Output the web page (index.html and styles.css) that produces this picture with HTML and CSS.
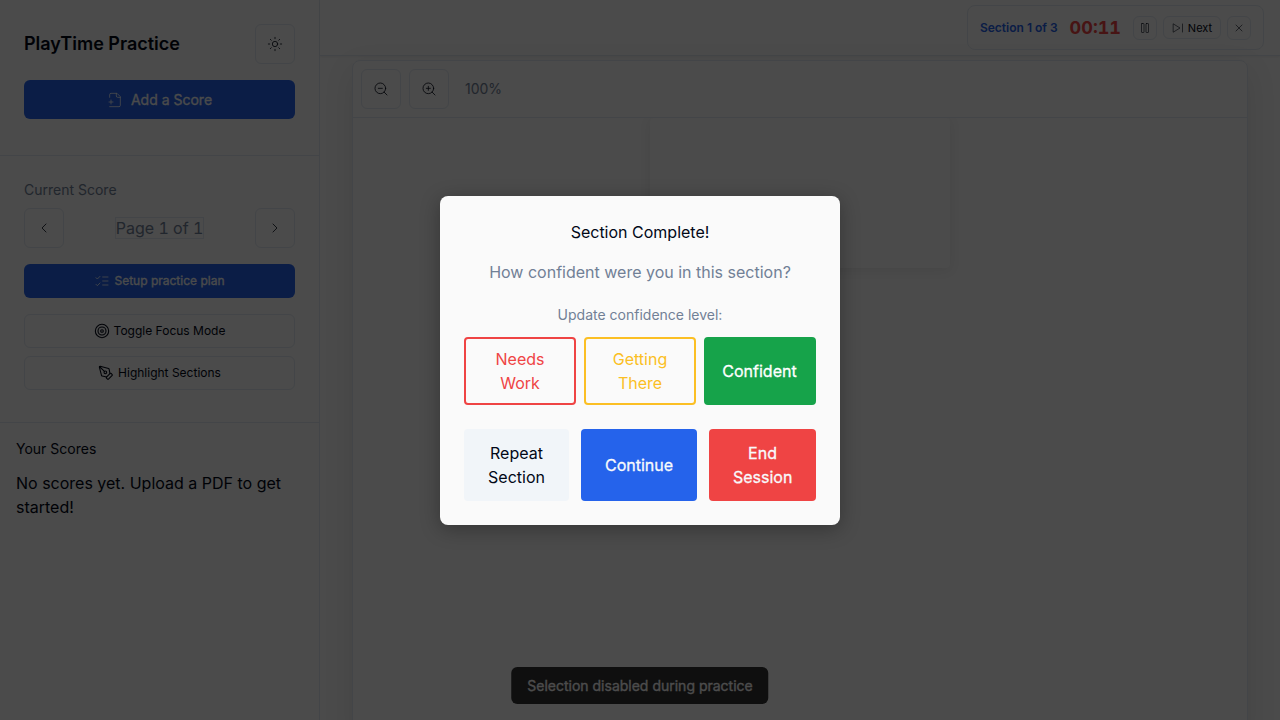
FILE: index.html
```html
<!DOCTYPE html>
<html lang="en">
<head>
<meta charset="utf-8">
<title>PlayTime Practice</title>
<link rel="stylesheet" href="styles.css">
</head>
<body>
<div class="app">
  <aside class="sidebar">
    <section class="brand">
      <div class="brand-row">
        <h1 class="title">PlayTime Practice</h1>
        <button class="icon-btn"><svg class="icon" viewBox="0 0 24 24"><circle cx="12" cy="12" r="4"/><path d="M12 2v2M12 20v2M4.93 4.93l1.41 1.41M17.66 17.66l1.41 1.41M2 12h2M20 12h2M6.34 17.66l-1.41 1.41M19.07 4.93l-1.41 1.41"/></svg></button>
      </div>
      <button class="btn btn-add"><svg class="icon" viewBox="0 0 24 24"><path d="M4 8V4a2 2 0 0 1 2-2h9l5 5v13a2 2 0 0 1-2 2H4"/><path d="M14 2v4a2 2 0 0 0 2 2h4M3 15h6M6 12v6"/></svg>Add a Score</button>
    </section>
    <section class="current">
      <div class="label">Current Score</div>
      <div class="pager">
        <button class="icon-btn"><svg class="icon" viewBox="0 0 24 24"><path d="m15 18-6-6 6-6"/></svg></button>
        <span class="page-text">Page 1 of 1</span>
        <button class="icon-btn"><svg class="icon" viewBox="0 0 24 24"><path d="m9 18 6-6-6-6"/></svg></button>
      </div>
      <button class="btn btn-plan"><svg class="icon" viewBox="0 0 24 24"><path d="m3 17 2 2 4-4M3 7l2 2 4-4M13 6h8M13 12h8M13 18h8"/></svg>Setup practice plan</button>
      <div class="tools">
        <button class="btn btn-outline"><svg class="icon" viewBox="0 0 24 24"><circle cx="12" cy="12" r="10"/><circle cx="12" cy="12" r="6"/><circle cx="12" cy="12" r="2"/></svg>Toggle Focus Mode</button>
        <button class="btn btn-outline"><svg class="icon" viewBox="0 0 24 24"><path d="M15.707 21.293a1 1 0 0 1-1.414 0l-1.586-1.586a1 1 0 0 1 0-1.414l5.586-5.586a1 1 0 0 1 1.414 0l1.586 1.586a1 1 0 0 1 0 1.414z"/><path d="m18 13-1.375-6.874a1 1 0 0 0-.746-.776L3.235 2.028a1 1 0 0 0-1.207 1.207L5.35 15.879a1 1 0 0 0 .776.746L13 18M2.3 2.3l7.286 7.286"/><circle cx="11" cy="11" r="2"/></svg>Highlight Sections</button>
      </div>
    </section>
    <section class="scores">
      <h2 class="scores-title">Your Scores</h2>
      <p class="empty">No scores yet. Upload a PDF to get started!</p>
    </section>
  </aside>
  <main class="main">
    <header class="topbar">
      <div class="session">
        <span class="step">Section 1 of 3</span>
        <span class="timer">00:11</span>
        <div class="controls">
          <button class="mini"><svg class="icon-sm" viewBox="0 0 24 24"><rect x="14" y="3" width="5" height="18" rx="1"/><rect x="5" y="3" width="5" height="18" rx="1"/></svg></button>
          <button class="mini mini-next"><svg class="icon-sm" viewBox="0 0 24 24"><path d="m3 4 13 8-13 8zM21 4v16"/></svg>Next</button>
          <button class="mini"><svg class="icon-sm" viewBox="0 0 24 24"><path d="M18 6 6 18M6 6l12 12"/></svg></button>
        </div>
      </div>
    </header>
    <div class="viewer">
      <div class="viewer-bar">
        <button class="icon-btn"><svg class="icon" viewBox="0 0 24 24"><circle cx="11" cy="11" r="8"/><path d="m21 21-4.35-4.35M8 11h6"/></svg></button>
        <button class="icon-btn"><svg class="icon" viewBox="0 0 24 24"><circle cx="11" cy="11" r="8"/><path d="m21 21-4.35-4.35M8 11h6M11 8v6"/></svg></button>
        <span class="zoom">100%</span>
      </div>
      <div class="stage"><div class="sheet"></div></div>
    </div>
  </main>
</div>
<div class="toast">Selection disabled during practice</div>
<div class="overlay">
  <div class="dialog">
    <h3 class="dialog-title">Section Complete!</h3>
    <p class="question">How confident were you in this section?</p>
    <p class="hint">Update confidence level:</p>
    <div class="levels">
      <button class="level level-low">Needs Work</button>
      <button class="level level-mid">Getting There</button>
      <button class="level level-high">Confident</button>
    </div>
    <div class="actions">
      <button class="action repeat">Repeat Section</button>
      <button class="action continue">Continue</button>
      <button class="action end">End Session</button>
    </div>
  </div>
</div>
</body>
</html>
```
FILE: styles.css
```css
* { box-sizing: border-box; margin: 0; }
body { font: 16px/24px Inter, sans-serif; color: #020817; background: #fafafa; height: 720px; overflow: hidden; }
button { font: inherit; color: inherit; border: 0; background: none; padding: 0; }
h1, h2, h3 { font-weight: 400; }
.icon, .icon-sm { width: 16px; height: 16px; fill: none; stroke: currentColor; stroke-width: 1.2; stroke-linecap: round; stroke-linejoin: round; flex: none; }
.icon-sm { width: 12px; height: 12px; }
.app { display: flex; height: 720px; }
.sidebar { width: 320px; border-right: 1px solid #e2e8f0; flex: none; }
.brand { padding: 24px 24px 36px; height: 156px; border-bottom: 1px solid #e2e8f0; }
.brand-row { display: flex; justify-content: space-between; align-items: center; margin-bottom: 16px; }
.title { font-size: 18px; line-height: 28px; font-weight: 600; }
.icon-btn { width: 40px; height: 40px; border: 1px solid #e2e8f0; border-radius: 6px; display: flex; align-items: center; justify-content: center; }
.btn { width: 100%; display: flex; align-items: center; justify-content: center; border-radius: 6px; }
.btn-add { height: 39px; gap: 8px; font-size: 14px; background: #2563eb; color: #f8fafc; }
.current { padding: 24px; height: 267px; border-bottom: 1px solid #e2e8f0; }
.label { font-size: 14px; line-height: 20px; color: #718096; margin-bottom: 8px; }
.pager { display: flex; justify-content: space-between; align-items: center; margin-bottom: 16px; }
.page-text { color: #718096; border: 1px solid #e2e8f0; line-height: 20px; font-variant-numeric: tabular-nums; }
.btn-plan { height: 34px; gap: 4px; font-size: 12px; background: #2563eb; color: #f8fafc; margin-bottom: 16px; }
.tools { display: flex; flex-direction: column; gap: 8px; }
.btn-outline { height: 34px; gap: 4px; font-size: 12px; border: 1px solid #e2e8f0; }
.btn-outline .icon { stroke-width: 1.6; }
.btn-add, .btn-plan, .toast, .level-high, .continue, .end { -webkit-text-stroke: .3px currentColor; }
.scores { padding: 16px; }
.scores-title { font-size: 14px; line-height: 20px; margin-bottom: 12px; }
.main { flex: 1; }
.topbar { height: 56px; border-bottom: 1px solid #e2e8f0; box-shadow: 0 1px 2px rgba(0,0,0,.05); display: flex; justify-content: flex-end; align-items: center; padding-right: 16px; }
.session { height: 45px; display: flex; align-items: center; padding: 0 12px; border: 1px solid #e2e8f0; border-radius: 8px; }
.step { font-size: 12px; font-weight: 600; color: #2563eb; margin-right: 12px; }
.timer { font-size: 18px; font-weight: 700; font-variant-numeric: tabular-nums; color: #ef4444; margin-right: 12px; }
.controls { display: flex; align-items: center; gap: 6px; }
.mini { width: 24px; height: 24px; border: 1px solid #e2e8f0; border-radius: 6px; display: flex; align-items: center; justify-content: center; }
.mini-next { width: 58px; height: 23px; gap: 4px; font-size: 11px; }
.viewer { margin: 4px 32px 0; height: 680px; border: 1px solid #e2e8f0; border-radius: 8px; box-shadow: 0 10px 30px rgba(0,0,0,.1); }
.viewer-bar { height: 57px; padding: 8px; display: flex; align-items: center; gap: 8px; border-bottom: 1px solid #e2e8f0; }
.zoom { font-size: 14px; color: #718096; margin-left: 8px; }
.stage { display: flex; justify-content: center; overflow: hidden; height: 600px; }
.sheet { width: 300px; height: 150px; border-radius: 4px; box-shadow: 0 2px 12px rgba(0,0,0,.08); }
.toast { position: absolute; left: 50%; bottom: 16px; transform: translateX(-50%); height: 37px; padding: 0 16px; line-height: 37px; font-size: 14px; border-radius: 6px; background: #333; color: #fff; white-space: nowrap; }
.overlay { position: absolute; inset: 0; background: rgba(0,0,0,.7); display: flex; align-items: center; justify-content: center; }
.dialog { width: 400px; height: 329px; padding: 24px; border-radius: 8px; background: #fafafa; text-align: center; box-shadow: 0 4px 20px rgba(0,0,0,.3); }
.dialog-title { font-size: 16px; margin-bottom: 16px; }
.question { color: #718096; margin-bottom: 20px; }
.hint { font-size: 14px; line-height: 21px; color: #718096; margin-bottom: 12px; }
.levels { display: grid; grid-template-columns: repeat(3, 1fr); gap: 8px; margin-bottom: 24px; }
.level { height: 68px; padding: 8px 16px; border: 2px solid; border-radius: 4px; }
.level-low { color: #ef4444; }
.level-mid { color: #fbbf24; }
.level-high { padding: 8px 15px 8px 14px; color: #fff; background: #16a34a; border-color: #16a34a; }
.actions { display: flex; gap: 12px; }
.action { height: 72px; padding: 12px 24px; border-radius: 4px; }
.repeat { width: 105px; background: #f1f5f9; }
.continue { width: 116px; background: #2563eb; color: #f8fafc; }
.end { width: 107px; background: #ef4444; color: #f8fafc; }
```
